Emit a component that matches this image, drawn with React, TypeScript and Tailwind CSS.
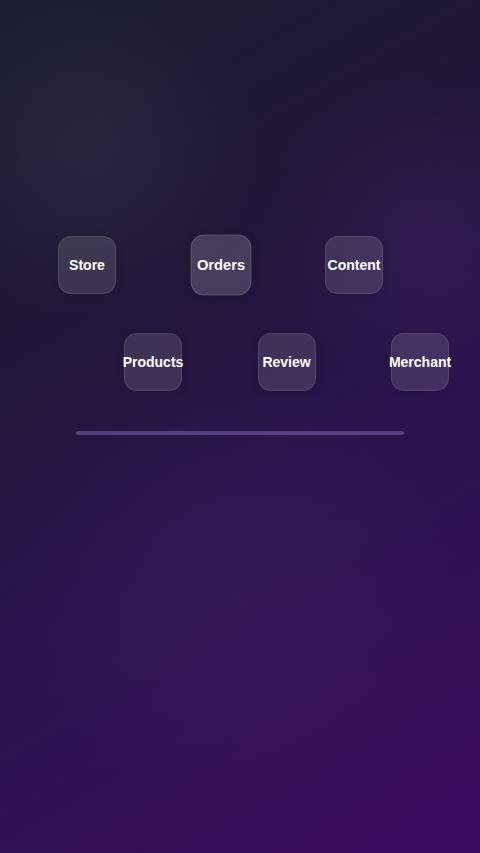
import React from "react";

const row1 = ["Store", "Orders", "Content"];
const row2 = ["Products", "Review", "Merchant"];

function Tile({ label, active }: { label: string; active?: boolean }) {
  return (
    <div
      className={
        active
          ? "w-[58px] h-[58px] shrink-0 rounded-[13px] bg-white/[0.17] border border-white/15 shadow-[0_2px_8px_rgba(0,0,0,0.12)] flex items-center justify-center scale-105"
          : "w-[58px] h-[58px] shrink-0 rounded-[13px] bg-white/[0.12] border border-white/10 shadow-[0_2px_8px_rgba(0,0,0,0.1)] flex items-center justify-center"
      }
    >
      <span className="whitespace-nowrap text-white font-bold text-[14px] leading-none font-['Liberation_Sans',Arial,sans-serif] -mt-px">
        {label}
      </span>
    </div>
  );
}

export default function App() {
  return (
    <div className="relative w-full min-h-[853px] h-[853px] overflow-hidden bg-[linear-gradient(150deg,#1a1e30_0%,#211636_30%,#2c1450_60%,#3b0c5f_100%)]">
      <div className="absolute inset-0 pointer-events-none bg-[radial-gradient(circle_at_90px_150px,rgba(70,70,90,0.28)_0px,rgba(70,70,90,0)_170px),radial-gradient(circle_at_240px_600px,rgba(80,40,110,0.22)_0px,rgba(80,40,110,0)_220px),radial-gradient(circle_at_420px_230px,rgba(80,40,120,0.25)_0px,rgba(80,40,120,0)_160px)]" />
      <div className="relative pt-[236px] flex flex-col">
        <div className="flex pl-[58px] gap-[75.5px]">
          {row1.map((l) => (
            <Tile key={l} label={l} active={l === "Orders"} />
          ))}
        </div>
        <div className="flex pl-[124px] gap-[75.5px] mt-[39px]">
          {row2.map((l) => (
            <Tile key={l} label={l} />
          ))}
        </div>
        <div className="ml-[76px] mt-[40px] w-[328px] h-[4px] rounded-full bg-[#9a80d0]/40" />
      </div>
    </div>
  );
}
